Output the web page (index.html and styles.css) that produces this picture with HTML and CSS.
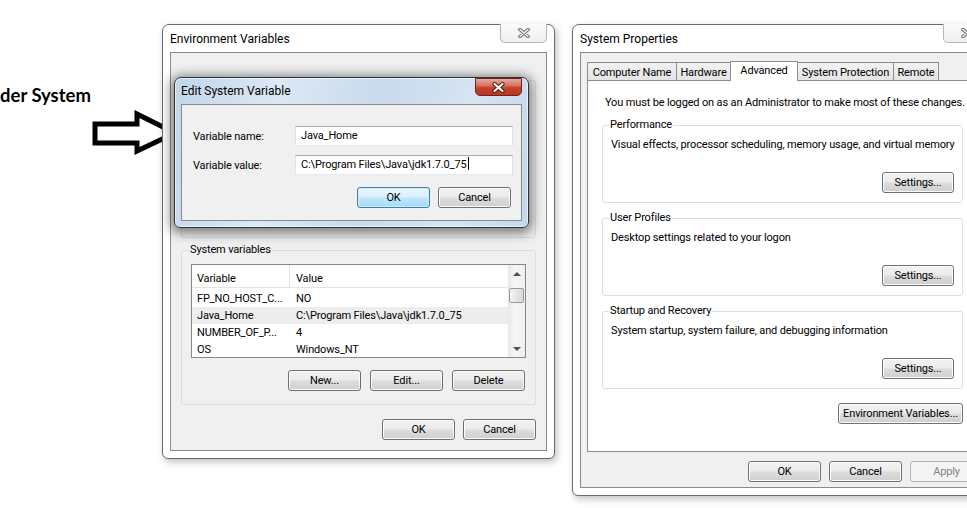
FILE: index.html
```html
<!DOCTYPE html>
<html lang="en">
  <head>
    <meta charset="UTF-8" />
    <meta name="viewport" content="width=device-width, initial-scale=1.0" />
    <title>Environment Variables</title>
    <link rel="stylesheet" href="styles.css">
  </head>
  <body>
    <div class="desktop">
      <div class="callout">der System</div>
      <svg class="arrow" width="90" height="46" viewBox="0 0 90 46">
        <polygon points="4,14 46,14 46,4 84,23 46,41 46,33 4,33" fill="#fff" stroke="#000" stroke-width="5" stroke-linejoin="miter" />
      </svg>

      <!-- Environment Variables -->
      <div class="window env-window">
        <div class="titlebar">
          <span class="title">Environment Variables</span>
          <span class="close-btn">
            <svg width="12" height="10" viewBox="0 0 12 10">
              <path d="M2 1.5 L10 8.5 M10 1.5 L2 8.5" stroke="#6f6f6f" stroke-width="3.6" stroke-linecap="round" />
              <path d="M2 1.5 L10 8.5 M10 1.5 L2 8.5" stroke="#f4f4f4" stroke-width="1.6" stroke-linecap="round" />
            </svg>
          </span>
        </div>
        <div class="client env-client">
          <fieldset class="group user-group"></fieldset>
          <fieldset class="group sys-group">
            <legend>System variables</legend>
            <div class="listview">
              <div class="lv-table">
                <div class="lv-row lv-head">
                  <span class="col-var">Variable</span>
                  <span class="col-val">Value</span>
                </div>
                <div class="lv-row">
                  <span class="col-var">FP_NO_HOST_C...</span>
                  <span class="col-val">NO</span>
                </div>
                <div class="lv-row selected">
                  <span class="col-var">Java_Home</span>
                  <span class="col-val">C:\Program Files\Java\jdk1.7.0_75</span>
                </div>
                <div class="lv-row">
                  <span class="col-var">NUMBER_OF_P...</span>
                  <span class="col-val">4</span>
                </div>
                <div class="lv-row">
                  <span class="col-var">OS</span>
                  <span class="col-val">Windows_NT</span>
                </div>
              </div>
              <div class="scrollbar">
                <div class="sb-btn sb-up"></div>
                <div class="sb-track"><div class="sb-thumb"></div></div>
                <div class="sb-btn sb-down"></div>
              </div>
            </div>
            <div class="btn-row group-buttons">
              <button class="btn">New...</button>
              <button class="btn">Edit...</button>
              <button class="btn">Delete</button>
            </div>
          </fieldset>
          <div class="btn-row env-buttons">
            <button class="btn">OK</button>
            <button class="btn">Cancel</button>
          </div>
        </div>
      </div>

      <!-- Edit System Variable -->
      <div class="window edit-dialog">
        <div class="titlebar">
          <span class="title">Edit System Variable</span>
          <span class="close-btn close-red">
            <svg width="13" height="11" viewBox="0 0 13 11">
              <path d="M2.5 2 L10.5 9 M10.5 2 L2.5 9" stroke="#5a1a12" stroke-width="4.2" stroke-linecap="round" />
              <path d="M2.5 2 L10.5 9 M10.5 2 L2.5 9" stroke="#fff" stroke-width="2.2" stroke-linecap="round" />
            </svg>
          </span>
        </div>
        <div class="client edit-client">
          <label class="field-label">Variable name:</label>
          <div class="textbox">Java_Home</div>
          <label class="field-label">Variable value:</label>
          <div class="textbox">C:\Program Files\Java\jdk1.7.0_75<span class="caret"></span></div>
          <div class="btn-row edit-buttons">
            <button class="btn btn-default">OK</button>
            <button class="btn">Cancel</button>
          </div>
        </div>
      </div>

      <!-- System Properties -->
      <div class="window sys-window">
        <div class="titlebar">
          <span class="title">System Properties</span>
          <span class="close-btn">
            <svg width="12" height="10" viewBox="0 0 12 10">
              <path d="M2 1.5 L10 8.5 M10 1.5 L2 8.5" stroke="#6f6f6f" stroke-width="3.6" stroke-linecap="round" />
              <path d="M2 1.5 L10 8.5 M10 1.5 L2 8.5" stroke="#f4f4f4" stroke-width="1.6" stroke-linecap="round" />
            </svg>
          </span>
        </div>
        <div class="client sys-client">
          <div class="tabstrip">
            <div class="tab tab-cn">Computer Name</div>
            <div class="tab tab-hw">Hardware</div>
            <div class="tab tab-adv active">Advanced</div>
            <div class="tab tab-sp">System Protection</div>
            <div class="tab tab-rm">Remote</div>
          </div>
          <div class="tabpanel">
            <p class="admin-note">You must be logged on as an Administrator to make most of these changes.</p>
            <fieldset class="group prop-group">
              <legend>Performance</legend>
              <p>Visual effects, processor scheduling, memory usage, and virtual memory</p>
              <button class="btn btn-settings">Settings...</button>
            </fieldset>
            <fieldset class="group prop-group">
              <legend>User Profiles</legend>
              <p>Desktop settings related to your logon</p>
              <button class="btn btn-settings">Settings...</button>
            </fieldset>
            <fieldset class="group prop-group">
              <legend>Startup and Recovery</legend>
              <p>System startup, system failure, and debugging information</p>
              <button class="btn btn-settings">Settings...</button>
            </fieldset>
            <button class="btn btn-env">Environment Variables...</button>
          </div>
          <div class="btn-row sys-buttons">
            <button class="btn">OK</button>
            <button class="btn">Cancel</button>
            <button class="btn" disabled>Apply</button>
          </div>
        </div>
      </div>
    </div>
  </body>
</html>
```

FILE: styles.css
```css
* {
  box-sizing: border-box;
}
body {
  margin: 0;
  background: #fff;
  font-family: Roboto, "Noto Sans", sans-serif;
  font-size: 11px;
  letter-spacing: -0.15px;
  color: #000;
}
.desktop {
  position: relative;
  width: 967px;
  height: 508px;
  overflow: hidden;
}
.callout {
  position: absolute;
  left: 0;
  top: 85px;
  font-family: Lato, "Open Sans", sans-serif;
  font-weight: bold;
  font-size: 18.5px;
  line-height: 20px;
  letter-spacing: 0;
}
.arrow {
  position: absolute;
  left: 91px;
  top: 110px;
}

/* window chrome */
.window {
  position: absolute;
  display: flex;
  flex-direction: column;
  background: #fff;
  border: 1px solid #6b6b6b;
  border-radius: 7px 7px 6px 6px;
  padding: 0 7px 7px;
  box-shadow: 2px 3px 7px rgba(0, 0, 0, 0.25);
}
.env-window {
  left: 162px;
  top: 24px;
  width: 393px;
  height: 435px;
}
.sys-window {
  left: 572px;
  top: 24px;
  width: 426px;
  height: 472px;
}
.edit-dialog {
  left: 174px;
  top: 77px;
  width: 355px;
  height: 151px;
  padding: 0 6px 6px;
  border-color: #2b333b;
  background: linear-gradient(100deg, #c2d6eb 0%, #dce8f4 28%, #c9daed 55%, #d6e4f2 80%, #c4d7ec 100%);
  box-shadow: 0 2px 12px 3px rgba(0, 0, 0, 0.5), inset 0 0 0 1px rgba(255, 255, 255, 0.6);
}
.titlebar {
  height: 27px;
  display: flex;
  justify-content: space-between;
  align-items: center;
  flex-shrink: 0;
}
.edit-dialog .titlebar {
  height: 26px;
}
.title {
  font-size: 12px;
  letter-spacing: 0;
  color: #000;
}
.close-btn {
  align-self: flex-start;
  margin-top: -1px;
  width: 47px;
  height: 19px;
  display: flex;
  align-items: center;
  justify-content: center;
  border: 1px solid #b4b4b4;
  border-top: none;
  border-radius: 0 0 5px 5px;
  background: linear-gradient(#fbfbfb, #eeeeee);
}
.close-red {
  margin-top: 0;
  height: 18px;
  border: 1px solid #6e2419;
  border-radius: 0 0 5px 5px;
  background: linear-gradient(#e6a89c 0%, #d47563 40%, #c5412c 55%, #b83622 100%);
}
.client {
  flex: 1;
  background: #f0f0f0;
  border: 1px solid #8b8b8b;
}

/* group boxes */
.group {
  margin: 0;
  border: 1px solid #d5dfe5;
  border-radius: 3px;
  padding: 0 8px 9px;
  min-width: 0;
}
.group legend {
  padding: 0 1px;
  margin-left: -2px;
  line-height: 14px;
}
.group p {
  margin: 6px 0 0;
  line-height: 14px;
  white-space: nowrap;
}

/* buttons */
.btn {
  width: 73px;
  height: 21px;
  padding: 0;
  font: inherit;
  letter-spacing: inherit;
  white-space: nowrap;
  color: #000;
  border: 1px solid #707070;
  border-radius: 3px;
  background: linear-gradient(#f2f2f2 0%, #ebebeb 48%, #dddddd 52%, #cfcfcf 100%);
  box-shadow: inset 0 0 0 1px #fcfcfc;
}
.btn-default {
  border-color: #3c7fb1;
  background: linear-gradient(#eaf6fd 0%, #d9f0fc 48%, #bee6fd 52%, #a7d9f5 100%);
  box-shadow: inset 0 0 0 1px #cdeefc;
}
.btn:disabled {
  color: #838383;
  border-color: #adb2b5;
  background: #f4f4f4;
  box-shadow: none;
}
.btn-row {
  display: flex;
  justify-content: flex-end;
  gap: 8px;
}

/* environment variables window */
.env-client {
  padding: 0 10px;
}
.user-group {
  margin-top: 27px;
  height: 158px;
}
.sys-group {
  margin-top: 5px;
  padding: 7px 9px 13px;
}
.listview {
  display: flex;
  height: 94px;
  border: 1px solid #828790;
  background: #fff;
}
.lv-table {
  flex: 1;
  overflow: hidden;
}
.lv-row {
  display: flex;
  height: 17px;
  line-height: 17px;
  white-space: nowrap;
}
.lv-row.selected {
  background: #ededed;
}
.lv-head {
  height: 23px;
  line-height: 23px;
  padding-top: 2px;
  margin-bottom: 2px;
  border-bottom: 1px solid #e3e3e3;
}
.col-var {
  width: 98px;
  padding-left: 5px;
  flex-shrink: 0;
  overflow: hidden;
}
.lv-head .col-var {
  margin-top: -2px;
  padding-top: 2px;
  border-right: 1px solid #e3e3e3;
}
.col-val {
  padding-left: 6px;
}
.scrollbar {
  width: 17px;
  display: flex;
  flex-direction: column;
  background: linear-gradient(90deg, #e9e9e9, #f5f5f5 40%, #f0f0f0);
}
.sb-btn {
  height: 17px;
  display: flex;
  align-items: center;
  justify-content: center;
}
.sb-up::after,
.sb-down::after {
  content: "";
  border-left: 4px solid transparent;
  border-right: 4px solid transparent;
}
.sb-up::after {
  border-bottom: 4px solid #505050;
}
.sb-down::after {
  border-top: 4px solid #505050;
}
.sb-track {
  flex: 1;
  padding-top: 6px;
}
.sb-thumb {
  height: 15px;
  margin: 0 1px;
  border: 1px solid #979797;
  border-radius: 2px;
  background: linear-gradient(90deg, #f4f4f4, #e6e6e6 50%, #d8d8d8);
}
.group-buttons {
  margin-top: 12px;
  padding-right: 1px;
  gap: 9px;
}
.env-buttons {
  margin-top: 14px;
}

/* edit dialog */
.edit-client {
  display: grid;
  grid-template-columns: 102px 218px;
  grid-auto-rows: 20px;
  row-gap: 9px;
  align-items: center;
  padding: 21px 10px 0 11px;
}
.textbox {
  height: 20px;
  line-height: 18px;
  padding-left: 5px;
  background: #fff;
  border: 1px solid;
  border-color: #abadb3 #dbdfe6 #e3e9ef #e2e3ea;
  white-space: nowrap;
}
.caret {
  display: inline-block;
  width: 1px;
  height: 13px;
  margin-left: 1px;
  background: #000;
  vertical-align: -2px;
}
.edit-buttons {
  grid-column: 1 / 3;
  margin-top: 7px;
  margin-right: 2px;
  height: 21px;
}

/* system properties */
.sys-client {
  display: flex;
  flex-direction: column;
  padding: 0 6px;
}
.tabstrip {
  display: flex;
  align-items: flex-end;
  height: 20px;
  margin-top: 8px;
  margin-bottom: -1px;
  position: relative;
  z-index: 1;
}
.tab {
  height: 19px;
  line-height: 19px;
  margin-right: -1px;
  text-align: center;
  white-space: nowrap;
  border: 1px solid #898c95;
  background: linear-gradient(#f3f3f3, #e4e4e4);
}
.tab.active {
  height: 20px;
  line-height: 17px;
  border-bottom: none;
  background: #fff;
  position: relative;
  z-index: 1;
}
.tab-cn { width: 90px; }
.tab-hw { width: 55px; }
.tab-adv { width: 68px; }
.tab-sp { width: 97px; }
.tab-rm { width: 46px; }
.tabpanel {
  height: 372px;
  border: 1px solid #898c95;
  background: #fff;
  padding: 15px 19px 0 14px;
}
.admin-note {
  margin: 0 0 0 3px;
  line-height: 14px;
  white-space: nowrap;
}
.prop-group {
  margin-top: 8px;
  display: flex;
  flex-direction: column;
}
.admin-note + .prop-group {
  margin-top: 8px;
}
.btn-settings {
  align-self: flex-end;
  width: 72px;
  margin-top: 20px;
}
.btn-env {
  display: block;
  width: 125px;
  margin: 14px 0 0 auto;
}
.sys-buttons {
  margin-top: 9px;
}
```
